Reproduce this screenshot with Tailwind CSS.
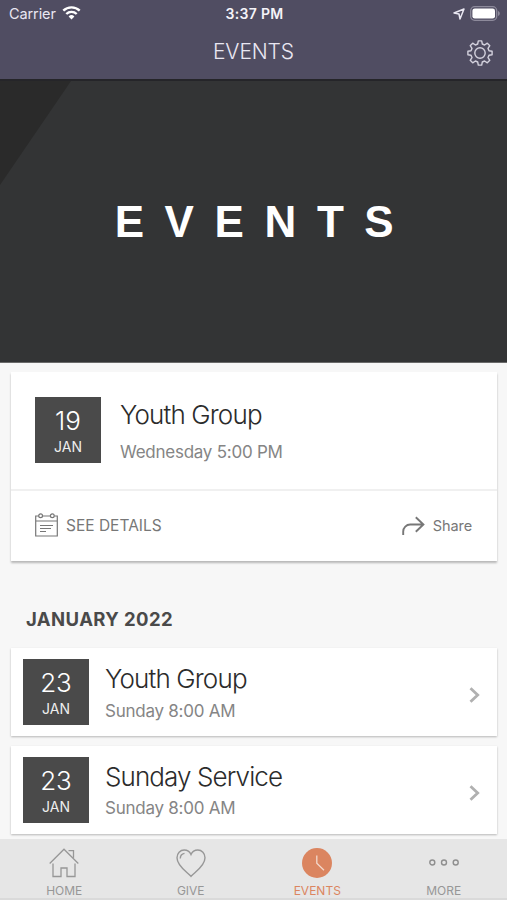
<!doctype html>
<html lang="en">
  <head>
    <meta charset="UTF-8" />
    <meta name="viewport" content="width=device-width, initial-scale=1.0" />
    <title>Events</title>
    <script src="https://cdn.jsdelivr.net/npm/@tailwindcss/browser@4"></script>
  </head>

  <body class="bg-[#f7f7f7] font-['Inter','Liberation_Sans',sans-serif]">
    <div class="flex flex-col w-[507px] h-[900px] overflow-hidden">
      <header class="h-[79px] shrink-0 bg-[#504d62] text-[#e9e7f2]">
        <!-- status bar -->
        <div class="grid grid-cols-3 items-center h-7 pl-[9px] pr-[7px]">
          <div class="flex items-center gap-[6px]">
            <span class="text-[14.5px] tracking-[-0.1px]">Carrier</span>
            <svg class="w-[19px] h-[15px] -mt-[3px]" viewBox="0 0 19 15" fill="none" stroke="#fff" stroke-width="2.4">
              <path d="M1.3 5.7a11.7 11.7 0 0 1 16.4 0" />
              <path d="M4.3 9a7.4 7.4 0 0 1 10.4 0" />
              <path d="M9.5 14.5 6.6 11.4a4.2 4.2 0 0 1 5.8 0z" fill="#fff" stroke="none" />
            </svg>
          </div>
          <div class="-mt-px text-center text-[14px] font-semibold tracking-[0.3px] text-[#f4f3f8]">3:37 PM</div>
          <div class="flex items-center justify-end gap-[5px] -mt-px">
            <svg class="w-3 h-3" viewBox="0 0 12 12" fill="none" stroke="#e9e7f2" stroke-width="1.5" stroke-linejoin="round">
              <path d="M11 1 7 11 6 6 1 5z" />
            </svg>
            <svg class="w-[30px] h-[15px]" viewBox="0 0 30 15">
              <rect x="0.7" y="0.7" width="26" height="13.6" rx="4" fill="none" stroke="#8d8a9b" stroke-width="1.3" />
              <rect x="2.4" y="2.4" width="22.6" height="10.2" rx="2.4" fill="#fff" />
              <path d="M28 5v5c1.2-.4 1.8-1.4 1.8-2.5S29.200 5.400 28 5z" fill="#8d8a9b" />
            </svg>
          </div>
        </div>
        <!-- title bar -->
        <div class="grid grid-cols-[1fr_auto_1fr] items-center h-[50px] px-[14px]">
          <span></span>
          <h1 class="pb-[2px] text-[21px] font-light leading-[48px] tracking-[-0.1px]">EVENTS</h1>
          <svg class="justify-self-end w-[26px] h-[26px]" viewBox="0 0 26 26" fill="none" stroke="#d3d1dd" stroke-width="1.4" stroke-linejoin="round">
            <path d="M11.300 0.900h3.400l.6 3.100 2.300 1 2.700-1.800 2.500 2.500-1.800 2.700 1 2.300 3.100.6v3.400l-3.100.6-1 2.300 1.800 2.700-2.500 2.500-2.700-1.800-2.300 1-.6 3.100h-3.400l-.6-3.100-2.300-1-2.700 1.800-2.500-2.500 1.800-2.700-1-2.300-3.100-.6v-3.400l3.100-.6 1-2.300-1.800-2.700 2.500-2.500 2.700 1.800 2.300-1z" />
            <circle cx="13" cy="13" r="5.2" />
          </svg>
        </div>
      </header>

      <section class="relative flex items-center justify-center h-[284px] shrink-0 bg-[#333435] border-t-2 border-[#252529] border-b border-b-[#6a6a6a]">
        <svg class="absolute left-0 top-0 w-[71px] h-[104px]" viewBox="0 0 71 104">
          <path d="M0 0h71L0 104z" fill="#2a2a2a" />
        </svg>
        <h2 class="pl-[22px] font-['Liberation_Sans',sans-serif] text-[44px] font-bold leading-none tracking-[20.6px] text-white">EVENTS</h2>
      </section>

      <main class="flex-1 min-h-0 pl-[11px] pr-[10px] pt-[9px] overflow-hidden">
        <article class="h-[189px] bg-white shadow-[0_2px_2px_rgba(0,0,0,0.26)]">
          <div class="flex h-[119px] pl-6 pt-[25px] border-b-2 border-[#f0f0f0]">
            <div class="flex flex-col items-center w-[66px] h-[66px] bg-[#4a4a4a] text-white">
              <span class="mt-[8px] text-[26px] font-light leading-[32px]">19</span>
              <span class="mt-px text-[14px] leading-[18px] text-[#eee]">JAN</span>
            </div>
            <div class="ml-[19px]">
              <h3 class="mt-px text-[26px] font-light leading-[34px] tracking-[-0.85px] text-[#2b2b2b]">Youth Group</h3>
              <p class="mt-[9px] text-[17px] leading-[22px] tracking-[-0.25px] text-[#858585]">Wednesday 5:00 PM</p>
            </div>
          </div>
          <div class="flex items-center justify-between h-[70px] pl-6 pr-[25px] text-[#777]">
            <div class="flex items-center gap-[8px]">
              <svg class="w-[23px] h-[24px] -mt-[2px]" viewBox="0 0 23 24" fill="none" stroke="#777" stroke-width="1.200">
                <path d="M3.700 3H.7v20h21.600V3h-3M7.500 3h8M.7 8h21.600" />
                <circle cx="5.600" cy="2.800" r="1.900" />
                <circle cx="17.300" cy="2.800" r="1.900" />
                <path d="M5 12.500h13M5 15.500h11M5 18.500h6" />
              </svg>
              <span class="text-[15.5px]">SEE DETAILS</span>
            </div>
            <div class="flex items-center gap-[8px]">
              <svg class="w-[23px] h-[20px] -mt-px" viewBox="0 0 23 20" fill="none" stroke="#777" stroke-width="1.900">
                <path d="M1.200 19v-3.500a7 7 0 0 1 7-7H21M13.800 1.300l7.600 7.200-7.600 7.200" />
              </svg>
              <span class="text-[14.5px] tracking-[-0.1px]">Share</span>
            </div>
          </div>
        </article>

        <h4 class="mt-[46px] pl-[15px] text-[18.5px] font-bold leading-6 tracking-[0.4px] text-[#4a4a4a]">JANUARY 2022</h4>

        <article class="flex h-[88px] mt-[17px] pl-3 pt-[11px] bg-white shadow-[0_1px_2px_rgba(0,0,0,0.26)]">
          <div class="flex flex-col items-center w-[66px] h-[66px] bg-[#4a4a4a] text-white">
            <span class="mt-[8px] text-[26px] font-light leading-[32px]">23</span>
            <span class="mt-px text-[14px] leading-[18px] text-[#eee]">JAN</span>
          </div>
          <div class="flex-1 ml-4">
            <h3 class="mt-[3px] text-[26px] font-light leading-[34px] tracking-[-0.85px] text-[#2b2b2b]">Youth Group</h3>
            <p class="mt-[4px] text-[17px] leading-[22px] tracking-[-0.25px] text-[#858585]">Sunday 8:00 AM</p>
          </div>
          <svg class="w-[11px] h-[16px] mt-[28px] mr-[17px]" viewBox="0 0 11 16" fill="none" stroke="#b0b0b0" stroke-width="2.800">
            <path d="M1.500 1.200 8.700 8l-7.200 6.800" />
          </svg>
        </article>

        <article class="flex h-[88px] mt-[10px] pl-3 pt-[11px] bg-white shadow-[0_1px_2px_rgba(0,0,0,0.26)]">
          <div class="flex flex-col items-center w-[66px] h-[66px] bg-[#4a4a4a] text-white">
            <span class="mt-[8px] text-[26px] font-light leading-[32px]">23</span>
            <span class="mt-px text-[14px] leading-[18px] text-[#eee]">JAN</span>
          </div>
          <div class="flex-1 ml-4">
            <h3 class="mt-[3px] text-[26px] font-light leading-[34px] tracking-[-0.9px] text-[#2b2b2b]">Sunday Service</h3>
            <p class="mt-[3px] text-[17px] leading-[22px] tracking-[-0.25px] text-[#858585]">Sunday 8:00 AM</p>
          </div>
          <svg class="w-[11px] h-[16px] mt-[28px] mr-[17px]" viewBox="0 0 11 16" fill="none" stroke="#b0b0b0" stroke-width="2.800">
            <path d="M1.500 1.200 8.700 8l-7.200 6.800" />
          </svg>
        </article>
      </main>

      <nav class="grid grid-cols-4 h-[61px] pl-px shrink-0 bg-[#e6e6e6] border-b-2 border-[#dadada] text-[12px] leading-4 text-[#979797]">
        <a class="flex flex-col items-center pt-[9px]">
          <svg class="w-[30px] h-[30px]" viewBox="0 0 30 30" fill="none" stroke="#979797" stroke-width="1.300">
            <path d="M.7 15.500 15 1.200l14.300 14.300M19.500 2.700h5v7M4 15.500v13h8v-8.500h6v8.500h8v-13" />
          </svg>
          <span class="mt-[5px]">HOME</span>
        </a>
        <a class="flex flex-col items-center pt-[9px]">
          <svg class="w-[30px] h-[30px]" viewBox="0 0 30 30" fill="none" stroke="#979797" stroke-width="1.400">
            <path d="M15 28.300C12 24.500 1 18.500 1 9.700 1 5.300 4.200 2 8.200 2c3 0 5.600 1.700 6.800 4.500C16.200 3.700 18.800 2 21.800 2 25.800 2 29 5.300 29 9.700c0 8.800-11 14.800-14 18.600z" />
            <path d="M4.300 10.500c0-2.700 1.700-4.700 4.200-5.100" />
          </svg>
          <span class="mt-[5px]">GIVE</span>
        </a>
        <a class="flex flex-col items-center pt-[9px] text-[#db8560]">
          <svg class="w-[30px] h-[30px]" viewBox="0 0 30 30">
            <circle cx="15" cy="15" r="15" fill="#db8560" />
            <path d="M14.800 7.500v7.800l7.200 7" fill="none" stroke="#f3d9cd" stroke-width="1.300" />
          </svg>
          <span class="mt-[5px]">EVENTS</span>
        </a>
        <a class="flex flex-col items-center pt-[9px]">
          <svg class="w-[30px] h-[30px]" viewBox="0 0 30 30" fill="none" stroke="#8f8f8f" stroke-width="1.400">
            <circle cx="3.300" cy="14.500" r="2.500" />
            <circle cx="15" cy="14.500" r="2.500" />
            <circle cx="26.700" cy="14.500" r="2.500" />
          </svg>
          <span class="mt-[5px]">MORE</span>
        </a>
      </nav>
    </div>
  </body>
</html>
